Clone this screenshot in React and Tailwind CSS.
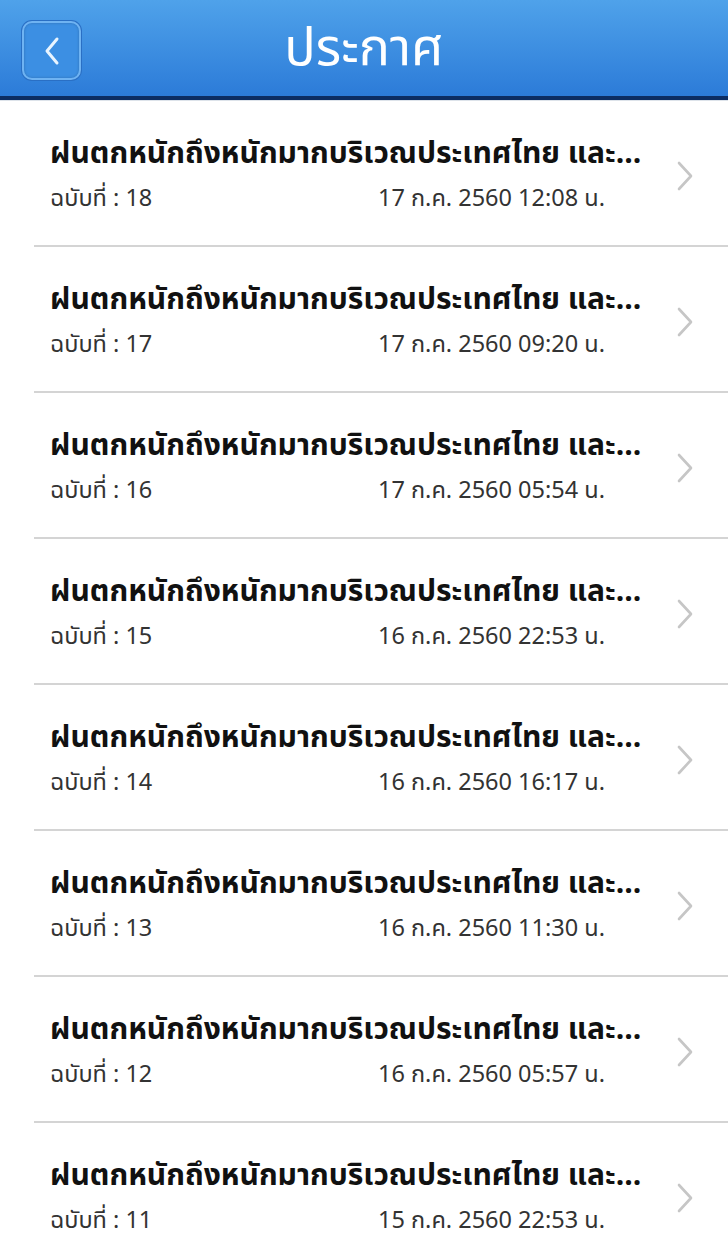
const ITEMS = [
  { no: 18, date: "17 ก.ค. 2560 12:08 น." },
  { no: 17, date: "17 ก.ค. 2560 09:20 น." },
  { no: 16, date: "17 ก.ค. 2560 05:54 น." },
  { no: 15, date: "16 ก.ค. 2560 22:53 น." },
  { no: 14, date: "16 ก.ค. 2560 16:17 น." },
  { no: 13, date: "16 ก.ค. 2560 11:30 น." },
  { no: 12, date: "16 ก.ค. 2560 05:57 น." },
  { no: 11, date: "15 ก.ค. 2560 22:53 น." },
];

const FONT = { fontFamily: "'Noto Sans Thai', 'Noto Sans', Tahoma, sans-serif" };

export default function App() {
  return (
    <div className="w-[728px] h-[1244px] overflow-hidden bg-white" style={FONT}>
      <header className="h-[100px] bg-gradient-to-b from-[#4fa2ea] to-[#2c7bd8] flex items-center relative border-b-[4px] border-[#0c2d63]">
        <button className="absolute left-[22px] top-[21px] w-[59px] h-[59px] rounded-[10px] border-2 border-[#6fb3f2] bg-[#3c8fe3] flex items-center justify-center shadow-[0_0_0_1px_#2a6fc4,inset_0_0_3px_rgba(0,0,0,0.2)]">
          <svg width="22" height="32" viewBox="0 0 22 32" fill="none">
            <path d="M16 4 L6 16 L16 28" stroke="#e8f4ff" strokeWidth="3" strokeLinecap="round" strokeLinejoin="round" />
          </svg>
        </button>
        <h1 className="w-full text-center text-white text-[52px] font-normal leading-none pt-[2px]">ประกาศ</h1>
      </header>
      <div className="h-[1px] bg-[#dde3ea]" />
      <ul>
        {ITEMS.map((item) => (
          <li key={item.no} className="ml-[34px] h-[146px] border-b-2 border-[#d4d4d4] flex items-center">
            <div className="flex-1 pl-[16px] pt-[4px]">
              <p className="text-[30px] font-bold text-[#111] leading-[40px] whitespace-nowrap">
                ฝนตกหนักถึงหนักมากบริเวณประเทศไทย และ...
              </p>
              <div className="flex text-[23.5px] text-[#333] leading-[34px] mt-[8px]">
                <span className="w-[328px]">ฉบับที่ : {item.no}</span>
                <span>{item.date}</span>
              </div>
            </div>
            <svg className="mr-[34px] mt-[6px]" width="18" height="32" viewBox="0 0 18 32" fill="none">
              <path d="M3 3 L15 16 L3 29" stroke="#c6c6c6" strokeWidth="2.6" strokeLinecap="round" strokeLinejoin="round" />
            </svg>
          </li>
        ))}
      </ul>
    </div>
  );
}
